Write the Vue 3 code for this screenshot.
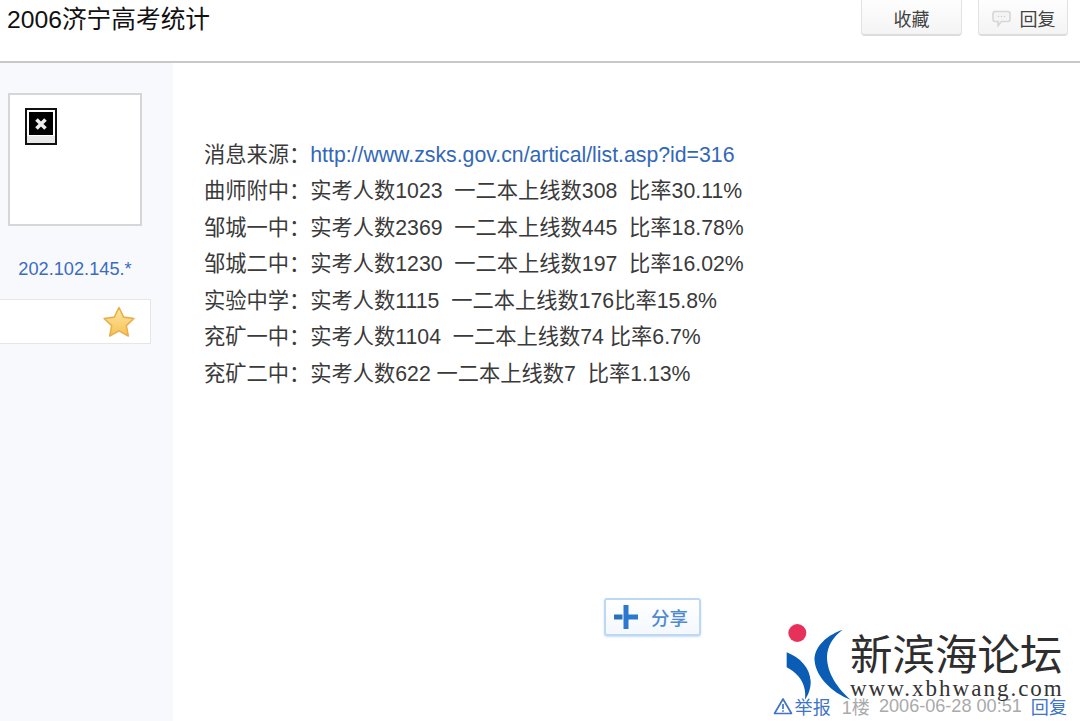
<script setup>
const lines = [
  ['曲师附中：', '实考人数1023  一二本上线数308  比率30.11%'],
  ['邹城一中：', '实考人数2369  一二本上线数445  比率18.78%'],
  ['邹城二中：', '实考人数1230  一二本上线数197  比率16.02%'],
  ['实验中学：', '实考人数1115  一二本上线数176比率15.8%'],
  ['兖矿一中：', '实考人数1104  一二本上线数74 比率6.7%'],
  ['兖矿二中：', '实考人数622 一二本上线数7  比率1.13%'],
]
</script>

<template>
  <div class="page">
    <header class="head">
      <h1 class="title">2006济宁高考统计</h1>
      <div class="actions">
        <button class="btn fav">收藏</button>
        <button class="btn reply">
          <svg class="bubble" width="21" height="18" viewBox="0 0 20 18">
            <path d="M3.5 1.5h13a2 2 0 0 1 2 2v6a2 2 0 0 1-2 2H10l-3.5 4v-4h-3a2 2 0 0 1-2-2v-6a2 2 0 0 1 2-2z" fill="#f4f4f4" stroke="#d6d6d6" stroke-width="1.6"/>
            <circle cx="7" cy="6.5" r=".8" fill="#d0d0d0"/><circle cx="10" cy="6.5" r=".8" fill="#d0d0d0"/><circle cx="13" cy="6.5" r=".8" fill="#d0d0d0"/>
          </svg>
          回复
        </button>
      </div>
    </header>
    <div class="body">
      <aside class="side">
        <div class="avatar">
          <div class="broken"><span class="broken-x">
            <svg width="18" height="18" viewBox="0 0 16 16"><path d="M4 4l8 8M12 4l-8 8" stroke="#eee" stroke-width="3.200"/></svg>
          </span></div>
        </div>
        <a class="ip">202.102.145.*</a>
        <div class="rank">
          <svg width="34" height="34" viewBox="0 0 34 34">
            <defs>
              <linearGradient id="st" x1="0" y1="0" x2="0" y2="1">
                <stop offset="0" stop-color="#fce7a4"/><stop offset="1" stop-color="#f7c253"/>
              </linearGradient>
            </defs>
            <path d="M17 2.500l4.600 9.600 10.300 1.400-7.600 7.200 2 10.300L17 25.900 7.700 31l2-10.300L2.100 13.500l10.300-1.400z" fill="url(#st)" stroke="#e8b04a" stroke-width="1.600" stroke-linejoin="round"/>
          </svg>
        </div>
      </aside>
      <main class="main">
        <div class="content">
          <p class="line"><span>消息来源：</span><a class="link">http://www.zsks.gov.cn/artical/list.asp?id=316</a></p>
          <p v-for="l in lines" :key="l[0]" class="line"><span>{{ l[0] }}</span>{{ l[1] }}</p>
        </div>
        <div class="share-row">
          <button class="share">
            <svg class="plus" width="24" height="24" viewBox="0 0 24 24">
              <path d="M9.500 0h5v9.500H24v5h-9.500V24h-5z" fill="#2c78cf"/>
              <path d="M0 9.500h8.500v5H0z" fill="#2c70bb"/>
            </svg>
            <span>分享</span>
          </button>
        </div>
        <footer class="foot">
          <a class="blue report">
            <svg width="20" height="18" viewBox="0 0 20 18"><path d="M10 2L18.500 16.500H1.500z" fill="none" stroke="#3f74c6" stroke-width="1.700" stroke-linejoin="round"/><path d="M10 7v5M10 13.200v1.600" stroke="#3f74c6" stroke-width="1.700"/></svg>举报</a>
          <span class="grey floor">1楼</span>
          <span class="grey">2006-06-28 00:51</span>
          <a class="blue">回复</a>
        </footer>
      </main>
    </div>
    <div class="wm">
      <svg class="wm-logo" width="90" height="95" viewBox="0 0 270 285">
        <circle cx="52" cy="45" r="27" fill="#e8315a"/>
        <path d="M188 35C130 55 100 95 104 130C108 175 155 225 212 245C175 215 140 165 141 115C142 85 160 55 188 35z" fill="#0a5cb5"/>
        <path d="M20 103C60 118 90 150 92 190C93 210 85 232 75 245C78 220 72 195 55 175C45 163 32 155 20 148z" fill="#0a5cb5"/>
      </svg>
      <div class="wm-text">
        <div class="wm-cn">新滨海论坛</div>
        <div class="wm-en">www.xbhwang.com</div>
      </div>
    </div>
  </div>
</template>

<style scoped>
.page {
  position: relative;
  width: 1080px;
  height: 721px;
  overflow: hidden;
  background: #fff;
  font-family: "Liberation Sans", "Noto Sans CJK SC", sans-serif;
  color: #333;
}
.head {
  height: 61px;
  border-bottom: 2px solid #c8c8c8;
  display: flex;
  justify-content: space-between;
  align-items: flex-start;
}
.title {
  margin: 3px 0 0 7px;
  font-size: 24.700px;
  line-height: 34px;
  font-weight: 400;
  color: #111;
}
.actions {
  display: flex;
  gap: 16px;
  margin: -6px 12px 0 0;
}
.btn {
  height: 42px;
  box-sizing: border-box;
  border: 1px solid #e2e2e2;
  border-bottom: 2px solid #dcdcdc;
  border-radius: 4px;
  background: linear-gradient(#fff, #f4f4f4);
  font: inherit;
  font-size: 18px;
  color: #444;
  padding: 6px 0 0;
  display: flex;
  align-items: center;
  justify-content: center;
}
.fav { width: 101px; }
.reply { width: 90px; gap: 8px; }
.bubble { margin-top: 2px; }
.body {
  display: flex;
  height: 658px;
}
.side {
  width: 173px;
  flex: none;
  background: #f8f9fc;
  padding-top: 30px;
  box-sizing: border-box;
}
.avatar {
  width: 134px;
  height: 133px;
  margin-left: 8px;
  box-sizing: border-box;
  border: 2px solid #d6d6d6;
  background: #fff;
  padding: 13px 0 0 15px;
}
.broken {
  width: 32px;
  height: 37px;
  box-sizing: border-box;
  border: 2px solid #111;
  padding: 2px;
  background: linear-gradient(#fff 80%, #e8e8e8 80%);
}
.broken-x {
  display: flex;
  width: 24px;
  height: 23px;
  background: #000;
  align-items: center;
  justify-content: center;
}
.ip {
  display: block;
  width: 150px;
  margin-top: 31px;
  text-align: center;
  font-size: 18.200px;
  line-height: 24px;
  color: #3a6cc0;
}
.rank {
  width: 151px;
  height: 45px;
  margin-top: 18px;
  box-sizing: border-box;
  border: 1px solid #e6e6e6;
  border-left: 0;
  background: #fff;
  display: flex;
  align-items: center;
  justify-content: flex-end;
  padding-right: 14px;
}
.main {
  flex: 1;
  min-width: 0;
  display: flex;
  flex-direction: column;
}
.content {
  padding: 74px 0 0 31px;
  font-size: 21.250px;
  line-height: 36.450px;
  color: #3a3a3a;
}
.line {
  margin: 0;
  white-space: pre;
}
.link { color: #3367b8; }
.share-row {
  margin-top: 206px;
  padding-left: 431px;
}
.share {
  width: 97px;
  height: 38px;
  box-sizing: border-box;
  border: 2px solid #bcd8f5;
  border-radius: 3px;
  background: linear-gradient(#fff, #f3f8fe);
  box-shadow: 0 1px 2px rgba(150, 190, 235, 0.5);
  padding: 0 0 0 8px;
  display: flex;
  align-items: center;
  gap: 13px;
  font: inherit;
  font-size: 18.500px;
  font-weight: 500;
  color: #4f8ad0;
}
.plus { filter: blur(0.4px); }
.foot {
  margin-top: auto;
  height: 24px;
  display: flex;
  justify-content: flex-end;
  align-items: center;
  gap: 9px;
  padding-right: 13px;
  padding-bottom: 3px;
  font-size: 18.100px;
  position: relative;
}
.blue { color: #3f74c6; }
.grey { color: #aaa; }
.floor { margin-left: 2px; }
.report { display: flex; align-items: center; gap: 2px; }
.wm {
  position: absolute;
  left: 780px;
  top: 618px;
  display: flex;
  pointer-events: none;
}
.wm-logo { flex: none; }
.wm-text {
  margin-left: -20px;
  padding-top: 12px;
}
.wm-cn {
  font-family: "Noto Sans CJK SC", sans-serif;
  font-weight: 400;
  font-size: 42.500px;
  line-height: 44px;
  color: #2e2e2e;
  white-space: nowrap;
}
.wm-en {
  font-family: "Liberation Serif", serif;
  font-size: 23px;
  line-height: 18px;
  letter-spacing: 2px;
  margin-top: 6px;
  color: #333;
  white-space: nowrap;
}
</style>
